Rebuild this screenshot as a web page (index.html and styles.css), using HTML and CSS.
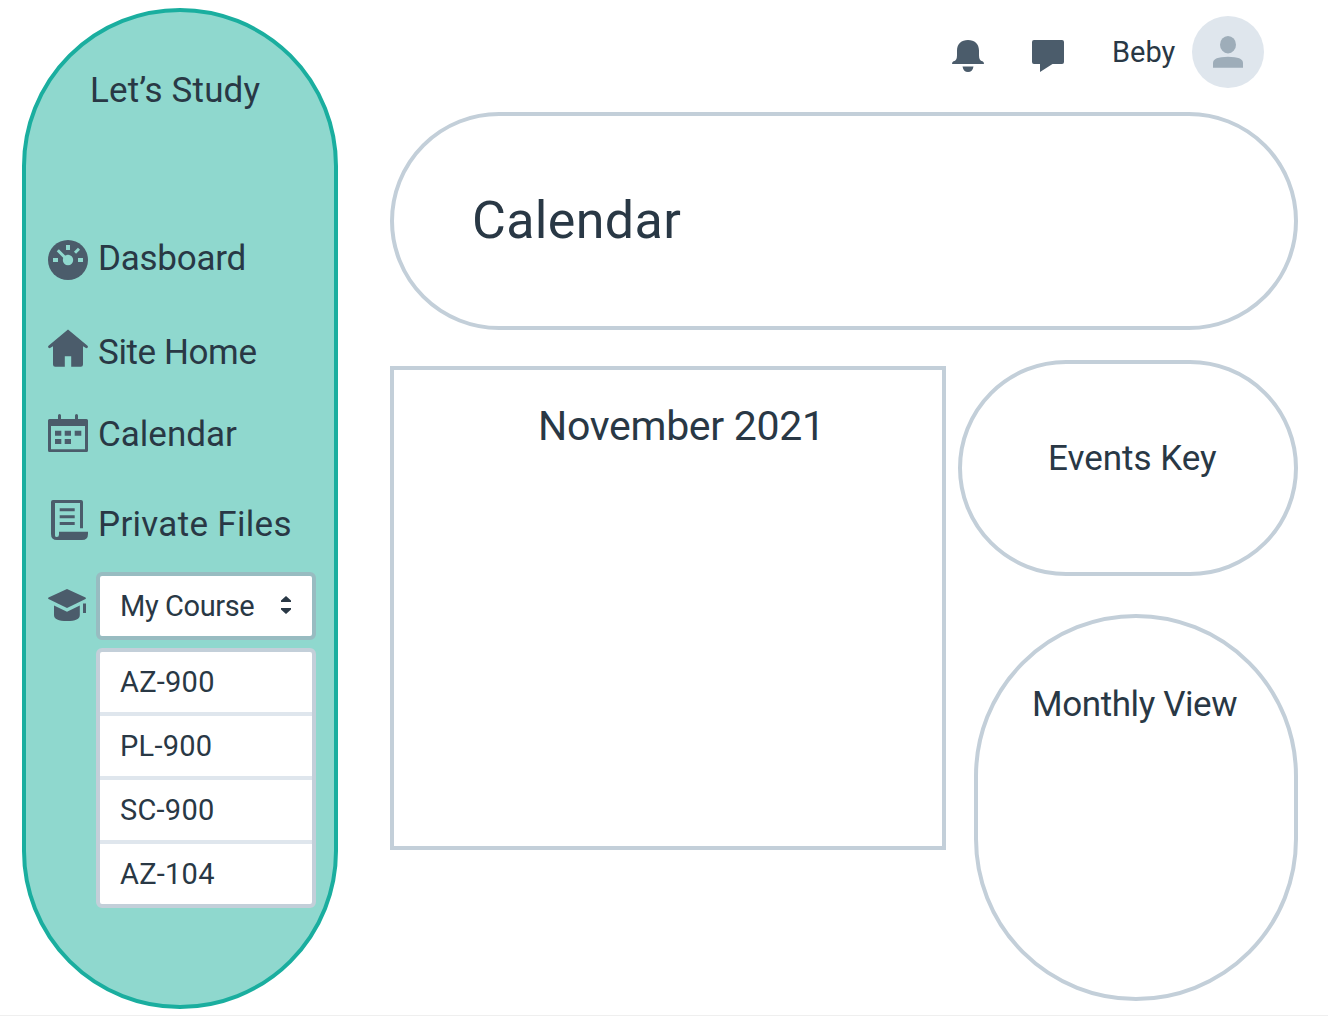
FILE: index.html
```html
<!DOCTYPE html>
<html lang="en">
<head>
<meta charset="utf-8">
<title>Let’s Study</title>
<link rel="stylesheet" href="styles.css">
</head>
<body>
<div class="app">
  <aside class="sidebar">
    <div class="brand"><span class="t-brand">Let’s Study</span></div>
    <nav class="nav">
      <a class="nav-item dashboard">
        <svg class="icon" width="40" height="40" viewBox="0 0 40 40"><circle cx="20" cy="20" r="20" fill="#4b5c6b"/><g fill="#8fd8ce"><circle cx="20" cy="20" r="5.2"/><path d="M5 18h5v4H5zM30 18h5v4h-5zM18 5h4v5h-4z"/></g><path d="M9.800 10.300 19 19.500M27 12.800l4-4" stroke="#8fd8ce" stroke-width="3"/></svg>
        <span class="label t-dashboard">Dasboard</span>
      </a>
      <a class="nav-item home">
        <svg class="icon" width="40" height="38" viewBox="0 0 40 38"><path d="M20 -.6 39.5 15.8q1 1 0 2-1 .8-2 0L35 16.2V34.5q0 2.2-2.2 2.2H23.2V26.2H16.8V36.7H7.2Q5 36.700 5 34.500V16.200L2.500 17.800q-1 .8-2 0-1-1 0-2z" fill="#4b5c6b"/></svg>
        <span class="label t-home">Site Home</span>
      </a>
      <a class="nav-item calendar">
        <svg class="icon" width="40" height="38" viewBox="0 0 40 38"><path fill="#4b5c6b" fill-rule="evenodd" d="M10 5V1.500a1.500 1.500 0 0 1 3 0V5H27V1.500a1.500 1.500 0 0 1 3 0V5h8.500Q40 5 40 6.500v30Q40 38 38.500 38h-37Q0 38 0 36.500v-30Q0 5 1.500 5zM3 12v23.200h34V12zM7 16.700h6.300v5H7zM16.700 16.700H23v5h-6.300zM26.700 16.700H33.300v5h-6.600zM7 25h6.300v5H7zM16.700 25H23v5h-6.300z"/></svg>
        <span class="label t-calendar">Calendar</span>
      </a>
      <a class="nav-item files">
        <svg class="icon" width="40" height="40" viewBox="0 0 40 40"><path fill="#4b5c6b" fill-rule="evenodd" d="M5 0H33Q35 0 35 2V28.300H32V3H7V35.500Q7 37 8.800 37 11 37 11 34.500V31.700H40V34Q40 40 34 40H9Q3 40 3 34V2Q3 0 5 0z"/><path d="M11.700 9.800h15M11.700 16.700h15M11.700 23.500h15" stroke="#4b5c6b" stroke-width="3"/></svg>
        <span class="label t-files">Private Files</span>
      </a>
      <div class="nav-item course">
        <svg class="icon" width="40" height="33" viewBox="0 0 40 33"><path fill="#4b5c6b" d="M19 0 37.500 8.600q1 .7 0 1.400L19 19 .5 10q-1-.7 0-1.400zM6 16.500 19 22.800 31.800 16.500V26Q31.800 32 19 32 6 32 6 26zM35 14.600h3V24h-3z"/></svg>
        <div class="course-menu">
          <div class="select"><span class="t-select">My Course</span>
            <svg width="12" height="20" viewBox="0 0 12 20"><path fill="#293845" d="M6 1 11 5.500V7H1V5.500zM1 13H11V14.500L6 19 1 14.500z"/></svg>
          </div>
          <ul class="options">
            <li><span class="t-opt">AZ-900</span></li>
            <li><span class="t-opt">PL-900</span></li>
            <li><span class="t-opt">SC-900</span></li>
            <li><span class="t-opt">AZ-104</span></li>
          </ul>
        </div>
      </div>
    </nav>
  </aside>
  <main class="main">
    <header class="topbar">
      <svg class="bell" width="32" height="32" viewBox="0 0 32 32"><path fill="#4b5c6b" d="M16 0C22.500 0 27 4 27 10.500V15.500Q27 20.500 30.500 21.300 32 21.800 32 24H0Q0 21.800 1.500 21.300 5 20.500 5 15.500V10.500C5 4 9.500 0 16 0zM10.500 26.500H21.500Q20.500 32 16 32 11.500 32 10.500 26.500z"/></svg>
      <svg class="chat" width="32" height="32" viewBox="0 0 32 32"><path fill="#4b5c6b" d="M2 0H30Q32 0 32 2V22Q32 24 30 24H20.500L8 32V24H2Q0 24 0 22V2Q0 0 2 0z"/></svg>
      <span class="user t-user">Beby</span>
      <svg class="avatar" width="72" height="72" viewBox="0 0 72 72"><circle cx="36" cy="36" r="36" fill="#dfe6ed"/><g fill="#9eadb9"><ellipse cx="36" cy="28.700" rx="8" ry="8.700"/><path d="M21 51.800V47Q21 40.700 36 40.700T51 47V51.800z"/></g></svg>
    </header>
    <section class="hero"><h1 class="t-hero">Calendar</h1></section>
    <div class="panels">
      <section class="month"><h2 class="t-month">November 2021</h2></section>
      <div class="side">
        <section class="events"><h3 class="t-events">Events Key</h3></section>
        <section class="monthly"><h3 class="t-monthly">Monthly View</h3></section>
      </div>
    </div>
  </main>
</div>
</body>
</html>
```
FILE: styles.css
```css
* { box-sizing: border-box; }
body {
  margin: 0;
  background: #fff;
  color: #293845;
  font-family: Roboto, "Liberation Sans", sans-serif;
  font-size: 35px;
  line-height: 40px;
  white-space: nowrap;
}
h1, h2, h3, ul { margin: 0; padding: 0; font-weight: 400; font-size: inherit; list-style: none; }
svg { display: block; flex: none; overflow: visible; }
.app {
  display: flex;
  gap: 52px;
  height: 1016px;
  padding: 8px 30px 0 22px;
  border-bottom: 1px solid #efefef;
}
.sidebar {
  width: 316px;
  height: 1001px;
  padding: 58px 18px 0 22px;
  border: 4px solid #1aae9f;
  border-radius: 158px;
  background: #8fd8ce;
}
.brand { height: 168px; padding: 1px 0 0 42px; }
.nav { display: flex; flex-direction: column; }
.nav-item { display: flex; align-items: flex-start; gap: 10px; height: 40px; }
.label { padding-top: 1px; }
.dashboard .icon { margin-top: 2px; }
.home { margin-top: 54px; }
.home .icon { margin-top: -2px; }
.calendar { margin-top: 42px; }
.files { margin-top: 50px; }
.files .icon { margin-top: -4px; }
.course { margin-top: 28px; gap: 8px; height: auto; }
.course .icon { margin-top: 17px; }
.course-menu { width: 220px; font-size: 29px; line-height: 36px; }
.select {
  display: flex;
  align-items: center;
  justify-content: space-between;
  height: 68px;
  padding: 0 20px 2px;
  border: 4px solid #98bcc1;
  border-radius: 6px;
  background: #fff;
}
.options { margin-top: 8px; border: 4px solid #c3cfd9; border-radius: 6px; background: #fff; }
.options li { height: 64px; padding: 12px 20px 0; border-bottom: 4px solid #dfe6ed; }
.options li:last-child { height: 60px; border-bottom: 0; }
.main { width: 908px; }
.topbar { display: flex; align-items: flex-start; justify-content: flex-end; height: 104px; padding: 8px 34px 0 0; }
.bell, .chat { margin: 24px 48px 0 0; }
.user { width: 80px; margin-top: 16px; }
.hero { height: 218px; padding: 75px 0 0 78px; border: 4px solid #c3cfd9; border-radius: 109px; }
.panels { display: flex; justify-content: space-between; margin-top: 30px; }
.month { width: 556px; height: 484px; margin-top: 6px; padding: 32px 0 0 144px; border: 4px solid #c3cfd9; }
.side { display: flex; flex-direction: column; align-items: flex-end; gap: 38px; }
.events { width: 340px; height: 216px; padding: 75px 0 0 86px; border: 4px solid #c3cfd9; border-radius: 108px; }
.monthly { width: 324px; height: 387px; padding: 67px 0 0 54px; border: 4px solid #c3cfd9; border-radius: 162px; }
.t-brand { letter-spacing: .15px; }
.t-dashboard { letter-spacing: -.25px; }
.t-home { letter-spacing: -.4px; }
.t-files { letter-spacing: .3px; }
.t-monthly { letter-spacing: -.4px; }
.t-select { padding-top: 2px; letter-spacing: -.4px; }
.t-opt { letter-spacing: .25px; }
.t-user { font-size: 29px; line-height: 40px; }
.t-hero { font-size: 52px; line-height: 60px; letter-spacing: .35px; }
.t-month { font-size: 41px; line-height: 48px; letter-spacing: -.3px; }
```
